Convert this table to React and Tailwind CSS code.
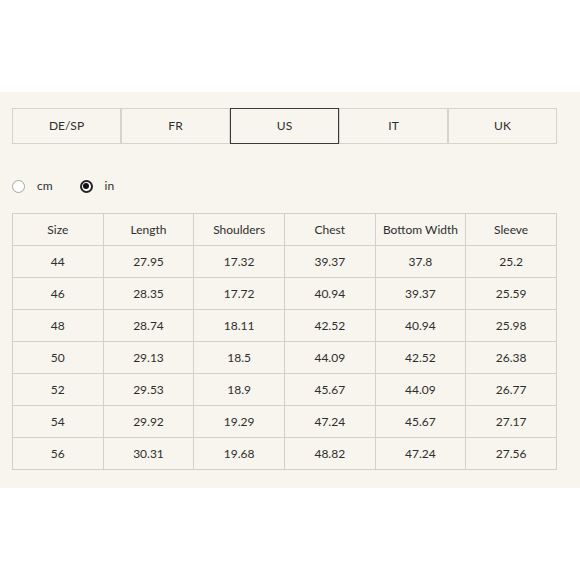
import React, { useState } from "react";

const regions = ["DE/SP", "FR", "US", "IT", "UK"];

const headers = ["Size", "Length", "Shoulders", "Chest", "Bottom Width", "Sleeve"];

const rows = [
  ["44", "27.95", "17.32", "39.37", "37.8", "25.2"],
  ["46", "28.35", "17.72", "40.94", "39.37", "25.59"],
  ["48", "28.74", "18.11", "42.52", "40.94", "25.98"],
  ["50", "29.13", "18.5", "44.09", "42.52", "26.38"],
  ["52", "29.53", "18.9", "45.67", "44.09", "26.77"],
  ["54", "29.92", "19.29", "47.24", "45.67", "27.17"],
  ["56", "30.31", "19.68", "48.82", "47.24", "27.56"],
];

export default function App() {
  const [region, setRegion] = useState("US");
  const [unit, setUnit] = useState("in");

  return (
    <div className="min-h-screen bg-white pt-[92px] font-['Lato','Liberation_Sans',sans-serif] text-[#2e2e2e]">
      <div className="bg-[#f8f5ef] px-3 pt-4 pb-[18px]">
        {/* Region tabs */}
        <div className="grid w-[545px] grid-cols-5">
          {regions.map((r) => (
            <button
              key={r}
              onClick={() => setRegion(r)}
              className={
                region === r
                  ? "h-9 border border-[#3a3a3a] text-[12px]"
                  : "h-9 border border-[#d6d3cd] text-[12px]"
              }
            >
              {r}
            </button>
          ))}
        </div>

        {/* Units */}
        <div className="mt-[33px] flex items-center text-[12px]">
          <button onClick={() => setUnit("cm")} className="flex items-center">
            <span
              className={
                unit === "cm"
                  ? "flex h-[13px] w-[13px] items-center justify-center rounded-full border-2 border-[#222] bg-white"
                  : "flex h-[13px] w-[13px] items-center justify-center rounded-full border border-[#a5a5a5] bg-white"
              }
            >
              {unit === "cm" && <span className="h-[6px] w-[6px] rounded-full bg-[#111]" />}
            </span>
            <span className="ml-[12px]">cm</span>
          </button>
          <button onClick={() => setUnit("in")} className="ml-[27px] flex items-center">
            <span
              className={
                unit === "in"
                  ? "flex h-[13px] w-[13px] items-center justify-center rounded-full border-2 border-[#222] bg-white"
                  : "flex h-[13px] w-[13px] items-center justify-center rounded-full border border-[#a5a5a5] bg-white"
              }
            >
              {unit === "in" && <span className="h-[6px] w-[6px] rounded-full bg-[#111]" />}
            </span>
            <span className="ml-[12px]">in</span>
          </button>
        </div>

        {/* Size table */}
        <table className="mt-[18px] w-[545px] table-fixed border-collapse text-[12px]">
          <thead>
            <tr>
              {headers.map((h) => (
                <th key={h} className="h-8 border border-[#d3d0ca] font-normal">
                  {h}
                </th>
              ))}
            </tr>
          </thead>
          <tbody>
            {rows.map((row) => (
              <tr key={row[0]}>
                {row.map((v, i) => (
                  <td key={i} className="h-8 border border-[#d3d0ca] text-center">
                    {v}
                  </td>
                ))}
              </tr>
            ))}
          </tbody>
        </table>
      </div>
    </div>
  );
}
